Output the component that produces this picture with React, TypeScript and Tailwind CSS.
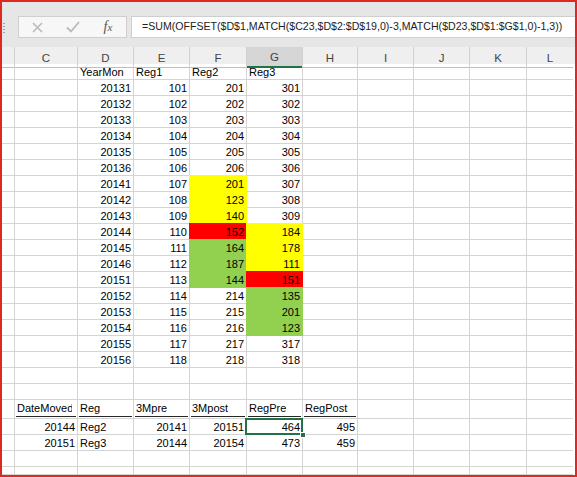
import React from 'react';

type Fill = '' | 'Y' | 'R' | 'G';
type Cell = { t?: string; a?: 'l' | 'r'; f?: Fill; u?: boolean; sel?: boolean; clip?: boolean };

const FILL: Record<'Y' | 'R' | 'G', string> = {
  Y: 'bg-[#ffff00] border-[#ffff00] shadow-[-1px_0_0_0_#ffff00,0_-1px_0_0_#ffff00,-1px_-1px_0_0_#ffff00]',
  R: 'bg-[#ff0000] border-[#ff0000] shadow-[-1px_0_0_0_#ff0000,0_-1px_0_0_#ff0000,-1px_-1px_0_0_#ff0000]',
  G: 'bg-[#92d050] border-[#92d050] shadow-[-1px_0_0_0_#92d050,0_-1px_0_0_#92d050,-1px_-1px_0_0_#92d050]',
};

const GRID = 'grid grid-cols-[13px_63px_56px_56px_57px_56px_55px_56px_56px_57px_46px]';

const data: [string, string, string, Fill, string, Fill][] = [
  ['20131', '101', '201', '', '301', ''],
  ['20132', '102', '202', '', '302', ''],
  ['20133', '103', '203', '', '303', ''],
  ['20134', '104', '204', '', '304', ''],
  ['20135', '105', '205', '', '305', ''],
  ['20136', '106', '206', '', '306', ''],
  ['20141', '107', '201', 'Y', '307', ''],
  ['20142', '108', '123', 'Y', '308', ''],
  ['20143', '109', '140', 'Y', '309', ''],
  ['20144', '110', '152', 'R', '184', 'Y'],
  ['20145', '111', '164', 'G', '178', 'Y'],
  ['20146', '112', '187', 'G', '111', 'Y'],
  ['20151', '113', '144', 'G', '151', 'R'],
  ['20152', '114', '214', '', '135', 'G'],
  ['20153', '115', '215', '', '201', 'G'],
  ['20154', '116', '216', '', '123', 'G'],
  ['20155', '117', '217', '', '317', ''],
  ['20156', '118', '218', '', '318', ''],
];

const empty = (): Cell[] => Array.from({ length: 11 }, () => ({}));

function buildRows(): { h: string; cells: Cell[] }[] {
  const rows: { h: string; cells: Cell[] }[] = [];
  const r1 = empty();
  r1[2] = { t: 'YearMon', a: 'l' };
  r1[3] = { t: 'Reg1', a: 'l' };
  r1[4] = { t: 'Reg2', a: 'l' };
  r1[5] = { t: 'Reg3', a: 'l' };
  rows.push({ h: 'h-[16px]', cells: r1 });
  for (const d of data) {
    const r = empty();
    r[2] = { t: d[0], a: 'r' };
    r[3] = { t: d[1], a: 'r' };
    r[4] = { t: d[2], a: 'r', f: d[3] };
    r[5] = { t: d[4], a: 'r', f: d[5] };
    rows.push({ h: 'h-[16px]', cells: r });
  }
  rows.push({ h: 'h-[16px]', cells: empty() });
  rows.push({ h: 'h-[16px]', cells: empty() });
  const hd = empty();
  hd[1] = { t: 'DateMoved', u: true, clip: true };
  hd[2] = { t: 'Reg', u: true };
  hd[3] = { t: '3Mpre', u: true };
  hd[4] = { t: '3Mpost', u: true };
  hd[5] = { t: 'RegPre', u: true };
  hd[6] = { t: 'RegPost', u: true };
  rows.push({ h: 'h-[19px]', cells: hd });
  const a = empty();
  a[1] = { t: '20144', a: 'r' };
  a[2] = { t: 'Reg2', a: 'l' };
  a[3] = { t: '20141', a: 'r' };
  a[4] = { t: '20151', a: 'r' };
  a[5] = { t: '464', a: 'r', sel: true };
  a[6] = { t: '495', a: 'r' };
  rows.push({ h: 'h-[16px]', cells: a });
  const b = empty();
  b[1] = { t: '20151', a: 'r' };
  b[2] = { t: 'Reg3', a: 'l' };
  b[3] = { t: '20144', a: 'r' };
  b[4] = { t: '20154', a: 'r' };
  b[5] = { t: '473', a: 'r' };
  b[6] = { t: '459', a: 'r' };
  rows.push({ h: 'h-[16px]', cells: b });
  rows.push({ h: 'h-[16px]', cells: empty() });
  rows.push({ h: 'h-[8px]', cells: empty() });
  return rows;
}

function GridCell({ c, last }: { c: Cell; last: boolean }) {
  const fill = c.f ? FILL[c.f] : 'border-[#d4d4d4]';
  return (
    <div
      className={`${c.sel ? 'relative' : ''} border-b ${last ? '' : 'border-r'} ${fill} whitespace-nowrap`}
    >
      {c.u ? (
        <div className="pt-[1px] px-[1px]">
          <div className="h-[16px] border-b border-[#262626] leading-[15px] px-[1px] overflow-hidden">
            {c.clip ? (
              <span className="inline-block w-[55px] overflow-hidden align-top">{c.t}</span>
            ) : (
              c.t
            )}
          </div>
        </div>
      ) : (
        <div
          className={`h-full flex items-start pt-[1px] leading-[14px] px-[2px] overflow-hidden ${
            c.a === 'r' ? 'justify-end' : 'justify-start'
          }`}
        >
          {c.t}
        </div>
      )}
      {c.sel && (
        <>
          <div className="absolute -left-[2px] -top-[1px] -right-[1px] -bottom-[1px] border-2 border-[#217346]" />
          <div className="absolute -right-[4px] -bottom-[4px] w-[6px] h-[6px] bg-[#217346] border border-white" />
        </>
      )}
    </div>
  );
}

const LETTERS = ['', 'C', 'D', 'E', 'F', 'G', 'H', 'I', 'J', 'K', 'L'];

export default function App() {
  const rows = buildRows();
  return (
    <div className="w-[577px] h-[477px] bg-white overflow-hidden font-['Liberation_Sans',Arial,sans-serif]">
      <div className="w-full h-full border-2 border-[#dc2a22] flex flex-col overflow-hidden">
        {/* formula bar band */}
        <div className="h-[45px] shrink-0 bg-[#e6e6e6] flex items-start pt-[14px]">
          <div className="w-[16px] h-[22px] flex flex-col items-start pl-[1px] pt-[7px] gap-[2px]">
            <div className="w-[2px] h-[1px] bg-[#a0a0a0]" />
            <div className="w-[2px] h-[1px] bg-[#a0a0a0]" />
            <div className="w-[2px] h-[1px] bg-[#a0a0a0]" />
            <div className="w-[2px] h-[1px] bg-[#a0a0a0]" />
          </div>
          <div className="w-[109px] h-[22px] bg-[#f7f7f7] border border-[#cfcfcf] flex items-center">
            <div className="w-[37px] flex justify-center">
              <svg width="11" height="11" viewBox="0 0 11 11">
                <path d="M1 1 L10 10 M10 1 L1 10" stroke="#b9b9b9" strokeWidth="1.5" fill="none" />
              </svg>
            </div>
            <div className="w-[34px] flex justify-center">
              <svg width="14" height="12" viewBox="0 0 14 12">
                <path d="M1 6.5 L5 10.5 L13 1" stroke="#b9b9b9" strokeWidth="1.8" fill="none" />
              </svg>
            </div>
            <div className="w-[36px] flex justify-center">
              <span className="font-['Liberation_Serif',serif] italic text-[14px] leading-[14px] text-[#555]">
                f<span className="text-[11px]">x</span>
              </span>
            </div>
          </div>
          <div className="ml-[4px] flex-1 h-[22px] bg-white border border-[#cfcfcf] border-r-0 pl-[10px] flex items-center text-[10.6px] text-[#222] whitespace-nowrap overflow-hidden">
            =SUM(OFFSET($D$1,MATCH($C23,$D$2:$D$19,0)-3,MATCH($D23,$D$1:$G$1,0)-1,3))
          </div>
        </div>
        {/* column header */}
        <div className={`${GRID} h-[17px] shrink-0 bg-[#efefef]`}>
          {LETTERS.map((l, i) => (
            <div
              key={i}
              className={`flex items-center justify-center pt-[2px] text-[11.5px] text-[#444] ${
                i === 10 ? '' : 'border-r border-[#d0d0d0]'
              } ${l === 'G' ? 'bg-[#d6d6d6] border-b-2 border-b-[#217346]' : 'border-b border-b-[#bdbdbd]'}`}
            >
              {l}
            </div>
          ))}
        </div>
        {/* rows */}
        <div className="text-[11px] text-black">
          {rows.map((r, ri) => (
            <div key={ri} className={`${GRID} ${r.h}`}>
              {r.cells.map((c, ci) => (
                <GridCell key={ci} c={c} last={ci === 10} />
              ))}
            </div>
          ))}
        </div>
      </div>
    </div>
  );
}
